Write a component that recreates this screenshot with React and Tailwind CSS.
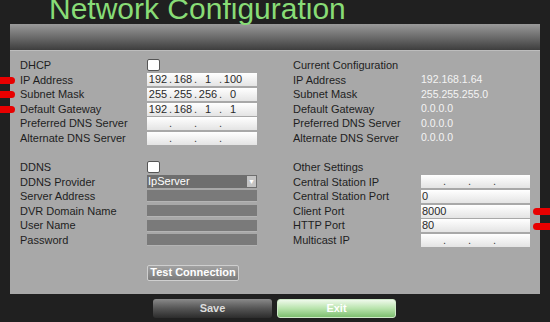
import React from "react";

const Label = ({ children }) => <span className="w-[127px] shrink-0 text-[#1e1e1e]">{children}</span>;
const RLabel = ({ children }) => <span className="w-[128px] shrink-0 text-[#1e1e1e]">{children}</span>;

const Row = ({ children }) => <div className="h-[14.6px] flex items-center">{children}</div>;

const IpBox = ({ parts = ["", "", "", ""], w = "w-[110px]" }) => (
  <div className={`${w} h-[13px] bg-gradient-to-b from-white to-[#e4e4e4] flex items-center text-[11px] text-[#2a2a2a] leading-none`}>
    {parts.map((p, i) => (
      <React.Fragment key={i}>
        <span className="w-[22px] text-center">{p}</span>
        {i < 3 && <span className="w-[3px] text-center text-[#444]">.</span>}
      </React.Fragment>
    ))}
  </div>
);

const TextBox = ({ value = "" }) => (
  <div className="w-[109px] h-[13px] bg-gradient-to-b from-white to-[#e4e4e4] flex items-center pl-[1px] text-[11px] text-[#2a2a2a] leading-none">
    {value}
  </div>
);

const DarkBox = () => <div className="w-[110px] h-[12px] bg-[#7a7a7a] border-b border-[#b4b4b4]" />;

const Check = () => <div className="w-[13px] h-[12px] bg-white border border-[#555] rounded-[2px]" />;

const Value = ({ children }) => <span className="text-[#f4f4f4] text-[10.5px]">{children}</span>;

export default function App() {
  return (
    <div className="relative w-[550px] h-[322px] bg-[#202020] overflow-hidden font-['Liberation_Sans',Arial,sans-serif] text-[11px]">
      {/* title */}
      <div className="h-[24px] pl-[49px] flex items-start">
        <div className="-mt-[6px] text-[30px] leading-none text-[#88dc76]">Network Configuration</div>
      </div>

      {/* panel */}
      <div className="ml-[10px] w-[530px]">
        <div className="h-[26px] bg-gradient-to-b from-[#9a9a9a] via-[#6c6c6c] to-[#3e3e3e]" />
        <div className="h-[244px] bg-[#a8a8a8] border-t border-[#bdbdbd] flex pt-[7px]">
          {/* left column */}
          <div className="w-[283px] pl-[10px]">
            <Row><Label>DHCP</Label><Check /></Row>
            <Row><Label>IP Address</Label><IpBox parts={["192", "168", "1", "100"]} /></Row>
            <Row><Label>Subnet Mask</Label><IpBox parts={["255", "255", "256", "0"]} /></Row>
            <Row><Label>Default Gateway</Label><IpBox parts={["192", "168", "1", "1"]} /></Row>
            <Row><Label>Preferred DNS Server</Label><IpBox /></Row>
            <Row><Label>Alternate DNS Server</Label><IpBox /></Row>

            <div className="h-[14.4px]" />

            <Row><Label>DDNS</Label><Check /></Row>
            <Row>
              <Label>DDNS Provider</Label>
              <div className="w-[110px] h-[13px] bg-[#6e6e6e] flex items-center text-white leading-none">
                <span className="flex-1 pl-[1px]">IpServer</span>
                <span className="w-[9px] h-[11px] mr-[1px] bg-[#c4c4c4] flex items-center justify-center text-white text-[7px]">▼</span>
              </div>
            </Row>
            <Row><Label>Server Address</Label><DarkBox /></Row>
            <Row><Label>DVR Domain Name</Label><DarkBox /></Row>
            <Row><Label>User Name</Label><DarkBox /></Row>
            <Row><Label>Password</Label><DarkBox /></Row>

            <div className="mt-[17px] ml-[127px] w-[92px] h-[16px] rounded-[2px] border border-[#cfcfcf] bg-gradient-to-b from-[#a2a2a2] to-[#7c7c7c] flex items-center justify-center text-white font-bold text-[11px] leading-none">
              Test Connection
            </div>
          </div>

          {/* right column */}
          <div className="flex-1">
            <Row><RLabel>Current Configuration</RLabel></Row>
            <Row><RLabel>IP Address</RLabel><Value>192.168.1.64</Value></Row>
            <Row><RLabel>Subnet Mask</RLabel><Value>255.255.255.0</Value></Row>
            <Row><RLabel>Default Gateway</RLabel><Value>0.0.0.0</Value></Row>
            <Row><RLabel>Preferred DNS Server</RLabel><Value>0.0.0.0</Value></Row>
            <Row><RLabel>Alternate DNS Server</RLabel><Value>0.0.0.0</Value></Row>

            <div className="h-[14.4px]" />

            <Row><RLabel>Other Settings</RLabel></Row>
            <Row><RLabel>Central Station IP</RLabel><IpBox w="w-[109px]" /></Row>
            <Row><RLabel>Central Station Port</RLabel><TextBox value="0" /></Row>
            <Row><RLabel>Client Port</RLabel><TextBox value="8000" /></Row>
            <Row><RLabel>HTTP Port</RLabel><TextBox value="80" /></Row>
            <Row><RLabel>Multicast IP</RLabel><IpBox w="w-[109px]" /></Row>
          </div>
        </div>
      </div>

      {/* bottom buttons */}
      <div className="flex pl-[153px] gap-[5px] mt-[5px]">
        <div className="w-[119px] h-[19px] rounded-[3px] bg-gradient-to-b from-[#8a8a8a] via-[#555] to-[#2c2c2c] flex items-center justify-center text-[#dcdcdc] font-bold text-[11px]">
          Save
        </div>
        <div className="w-[119px] h-[19px] rounded-[3px] border border-[#cfe9c8] bg-gradient-to-b from-[#eef9ea] via-[#b8e3ac] to-[#7ebf70] flex items-center justify-center text-white font-bold text-[11px]">
          Exit
        </div>
      </div>

      {/* red markers */}
      <div className="absolute left-0 top-[77px] w-[15px] h-[7px] rounded-r-full bg-[#e80000]" />
      <div className="absolute left-0 top-[91px] w-[15px] h-[7px] rounded-r-full bg-[#e80000]" />
      <div className="absolute left-0 top-[106px] w-[15px] h-[7px] rounded-r-full bg-[#e80000]" />
      <div className="absolute right-0 top-[208px] w-[17px] h-[7px] rounded-l-full bg-[#e80000]" />
      <div className="absolute right-0 top-[223px] w-[17px] h-[7px] rounded-l-full bg-[#e80000]" />
    </div>
  );
}
